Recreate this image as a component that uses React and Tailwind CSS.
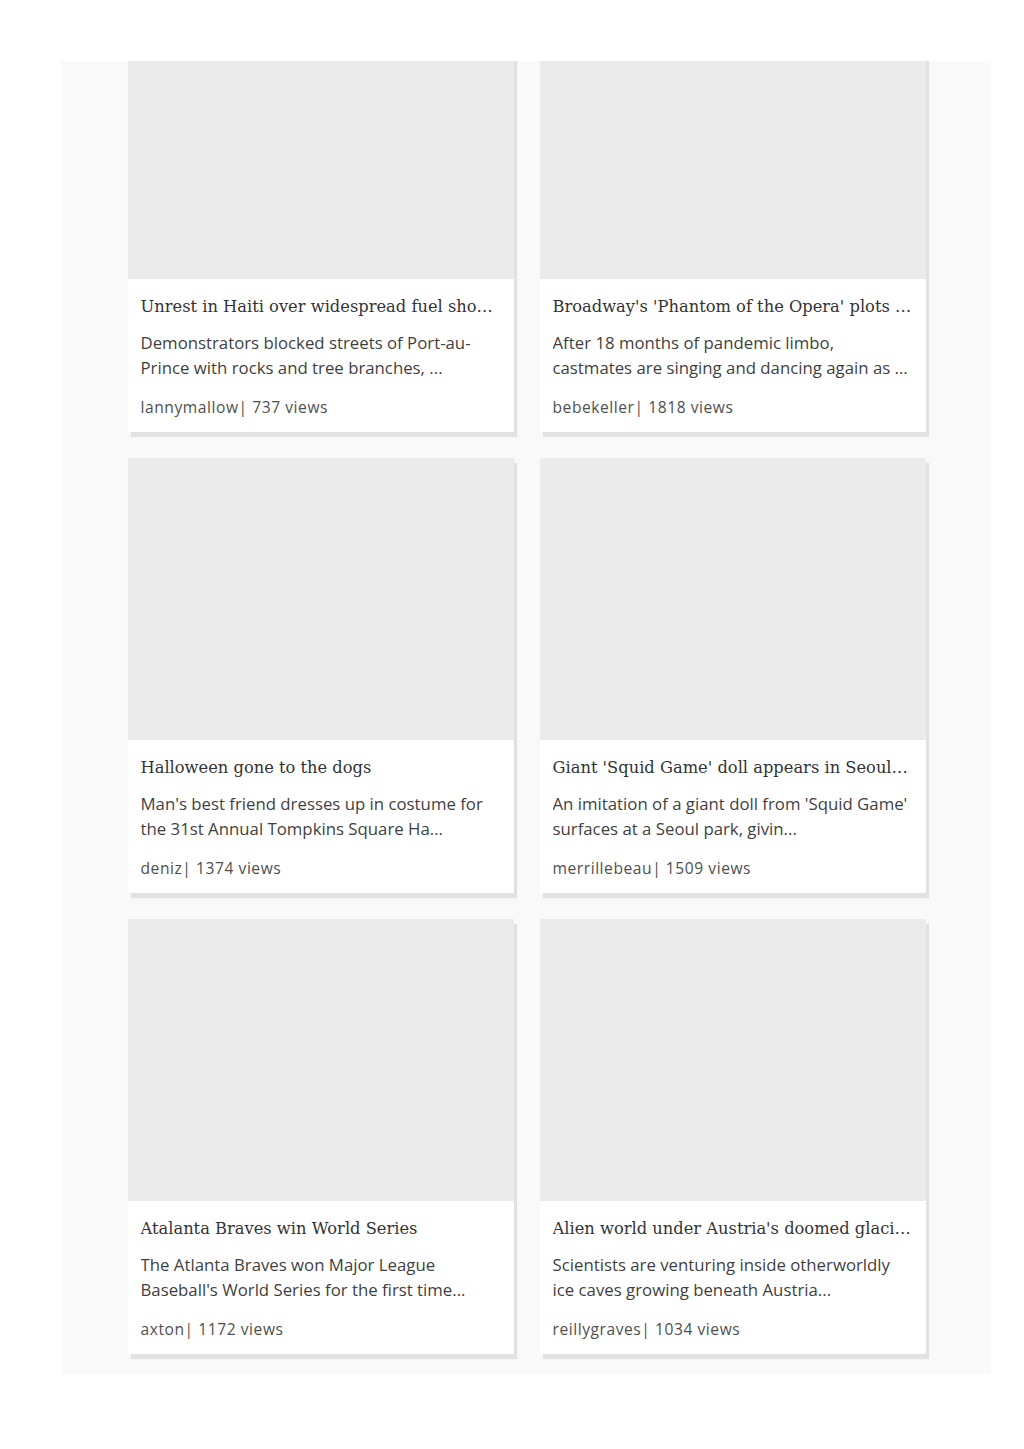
import React from 'react';

const posts = [
  {
    title: 'Unrest in Haiti over widespread fuel shortages',
    description: 'Demonstrators blocked streets of Port-au-Prince with rocks and tree branches, ...',
    author: 'lannymallow',
    views: 737,
  },
  {
    title: "Broadway's 'Phantom of the Opera' plots its return",
    description: 'After 18 months of pandemic limbo, castmates are singing and dancing again as ...',
    author: 'bebekeller',
    views: 1818,
  },
  {
    title: 'Halloween gone to the dogs',
    description: "Man's best friend dresses up in costume for the 31st Annual Tompkins Square Ha...",
    author: 'deniz',
    views: 1374,
  },
  {
    title: "Giant 'Squid Game' doll appears in Seoul park",
    description: "An imitation of a giant doll from 'Squid Game' surfaces at a Seoul park, givin...",
    author: 'merrillebeau',
    views: 1509,
  },
  {
    title: 'Atalanta Braves win World Series',
    description: "The Atlanta Braves won Major League Baseball's World Series for the first time...",
    author: 'axton',
    views: 1172,
  },
  {
    title: "Alien world under Austria's doomed glaciers",
    description: 'Scientists are venturing inside otherworldly ice caves growing beneath Austria...',
    author: 'reillygraves',
    views: 1034,
  },
];

const PostCard = ({ post }) => {
  return (
    <div className="bg-white shadow-[3px_5px_1px_rgba(0,0,0,0.09)]">
      {/* Image placeholder */}
      <div className="h-[282px] bg-[#ebebeb]"></div>

      <div className="px-[13px] pt-[15px] pb-[14px]">
        <h3
          className="truncate text-[16.3px] leading-[26px] text-[#333]"
          style={{ fontFamily: '"DejaVu Serif", serif' }}
        >
          {post.title}
        </h3>
        <p
          className="mt-[10px] line-clamp-2 text-[16.8px] leading-[25px] text-[#3f3f3f]"
          style={{ fontFamily: '"Open Sans", sans-serif' }}
        >
          {post.description}
        </p>
        <div
          className="mt-[16px] text-[15.6px] leading-[22px] tracking-[0.55px] text-[#4f4f4f]"
          style={{ fontFamily: '"Open Sans", sans-serif' }}
        >
          {`${post.author}| ${post.views} views`}
        </div>
      </div>
    </div>
  );
};

export default function App() {
  return (
    <div className="min-h-[1449px] bg-white pt-[61px]">
      <div className="ml-[62px] h-[1313px] w-[929px] overflow-hidden bg-[#f9f9f9]">
        <div className="-mt-[64px] grid grid-cols-[386px_386px] justify-center gap-x-[26px] gap-y-[26px] pb-5">
          {posts.map((post) => (
            <PostCard key={post.author} post={post} />
          ))}
        </div>
      </div>
    </div>
  );
}
